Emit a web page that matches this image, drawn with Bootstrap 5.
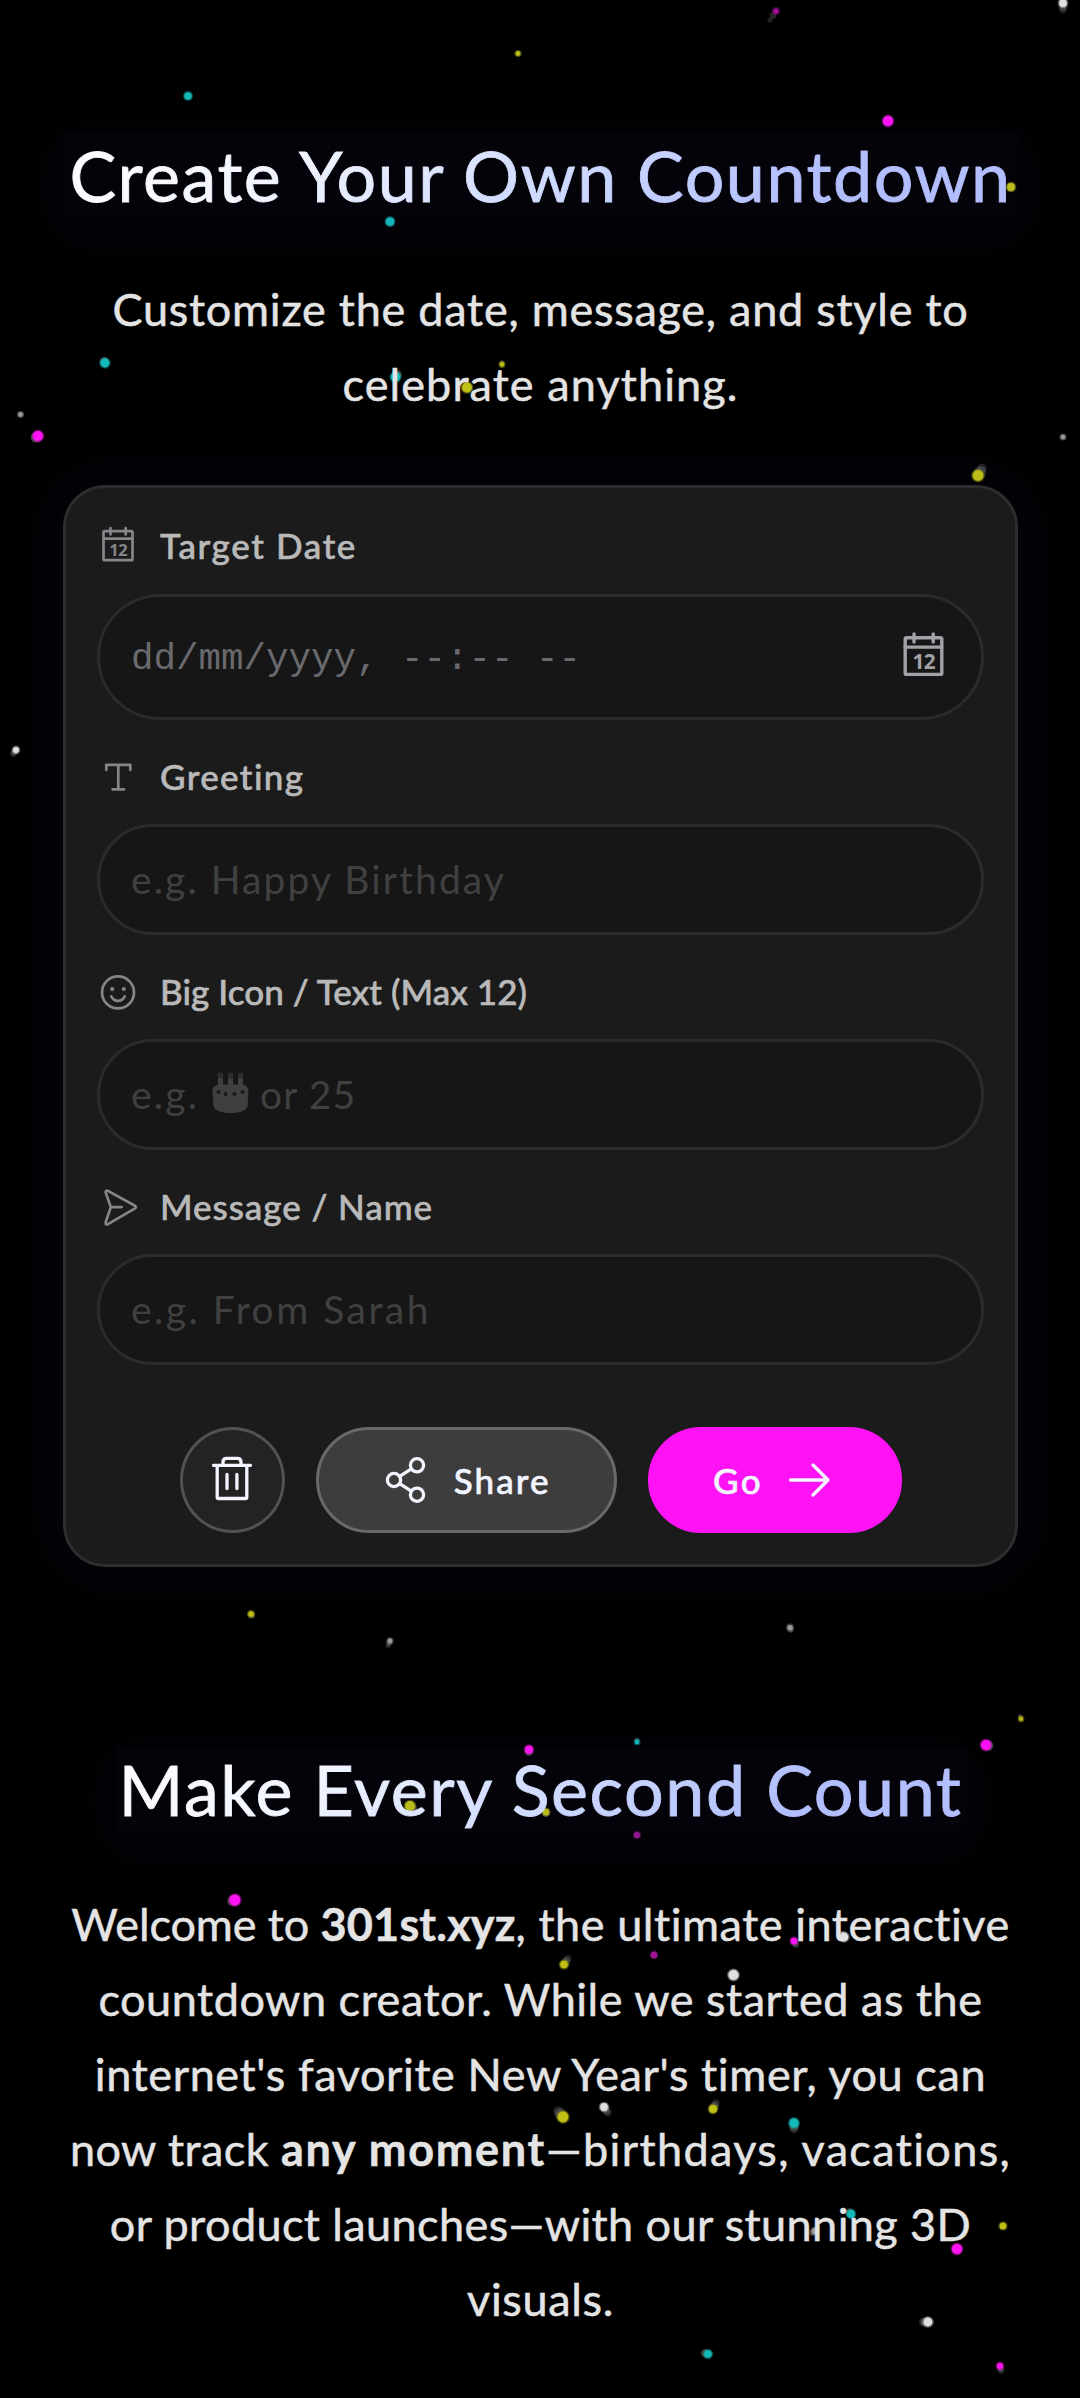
<!DOCTYPE html>
<html lang="en">
<head>
<meta charset="utf-8">
<meta name="viewport" content="width=device-width, initial-scale=1">
<title>Create Your Own Countdown</title>
<link href="https://cdn.jsdelivr.net/npm/bootstrap@5.3.0/dist/css/bootstrap.min.css" rel="stylesheet">
<style>
body{background:#000;color:#e4e4e4;font-family:Lato,"Noto Sans",sans-serif;min-height:2398px;overflow-x:hidden}
.stars{position:absolute;left:0;top:0;width:1080px;height:2398px;z-index:0}
.page{z-index:1;width:955px;margin-left:63px;padding-top:133px}
.title{font-size:70px;line-height:84px;font-weight:400;margin:0;white-space:nowrap;color:transparent;-webkit-text-stroke:.9px transparent;background:linear-gradient(135deg,#fff 0%,#f2f5ff 24%,#d0dcff 50%,#b2befd 78%,#b2befd 100%);-webkit-background-clip:text;background-clip:text}
.title-wrap{box-shadow:0 12px 60px 22px rgba(110,70,230,.04);background:rgba(110,70,230,.04)}
.intro{font-size:45px;line-height:75px;margin:0;white-space:nowrap;-webkit-text-stroke:.5px currentColor}
.intro strong{font-weight:700}
.panel{--bs-card-bg:#1b1b1b;border:3px solid #2d2d2d;border-radius:42px;padding:37px 31px 31px;margin-top:63px;box-shadow:0 0 60px 30px rgba(110,70,230,.04)}
.field{margin-bottom:36px}
.field-label{height:42px;gap:21px;font-size:35px;font-weight:500;line-height:42px;color:#b9b9b9;margin-bottom:26.5px;white-space:nowrap;-webkit-text-stroke:.6px currentColor}
.field-label svg{color:#85858a;-webkit-text-stroke:0}
.field-label span{position:relative;top:-1px}
.field-box,.field-box:focus{height:110.5px;border:3px solid #2b2b2b;background:#161616;color:#404040;font-size:39px;padding:0 31px;line-height:1.2}
.field-box::placeholder{color:#404040;opacity:1}
.date-box,.date-box:focus{height:126px;color:#6a6a6e;font:37.5px/44px "Liberation Mono",monospace}
.date-box svg{color:#a1a1a8}
.date-box span{padding-top:4px}
.actions{gap:31px;margin-top:62.5px}
.actions .btn{height:106px;border-width:3px;font-size:35px;font-weight:500;color:#f2f5ff;line-height:42px;-webkit-text-stroke:.6px currentColor}
.btn-trash{width:105.5px;background:#232323;border-color:#525252}
.btn-share{width:300.5px;gap:24px;background:#3d3d3d;border-color:#69696c}
.btn-go{width:254px;gap:22px;padding-right:3px!important;background:#ff12f3;border-color:#ff12f3}
svg.ic{fill:none;stroke:currentColor;stroke-width:2.7;stroke-linecap:round;stroke-linejoin:round;flex:none}
.actions svg.ic{stroke-width:3.3}
.second{margin-top:180px}
</style>
<script src="https://cdn.jsdelivr.net/npm/bootstrap@5.3.0/dist/js/bootstrap.bundle.min.js"></script>
</head>
<body>
<svg class="stars" id="stars" viewBox="0 0 1080 2398" aria-hidden="true"></svg>
<main class="page position-relative">
  <section class="text-center">
    <div class="title-wrap"><h1 class="title" style="letter-spacing:1.5px">Create Your Own Countdown</h1></div>
    <p class="intro" style="padding-top:55px">
      <span class="d-block" style="letter-spacing:.75px">Customize the date, message, and style to</span>
      <span class="d-block" style="letter-spacing:1.1px">celebrate anything.</span>
    </p>
  </section>

  <form class="card panel">
    <div class="field">
      <div class="field-label d-flex align-items-center" style="letter-spacing:1.62px">
        <svg class="ic" width="42" height="42" viewBox="0 0 42 42"><rect x="6.5" y="6.2" width="29" height="29" rx="1.2"/><path d="M6.5 13.6h29M13.5 3.2v6.3M28.7 3.2v6.3"/><text x="21.2" y="30.8" text-anchor="middle" font-family="Open Sans" font-weight="700" font-size="16.5" letter-spacing="-.6" fill="currentColor" stroke="none">12</text></svg><span>Target Date</span></div>
      <div class="form-control rounded-pill field-box date-box d-flex align-items-center justify-content-between"><span>dd/mm/yyyy, --:-- --</span>
        <svg class="ic" width="53" height="53" viewBox="0 0 42 42"><rect x="6.5" y="6.2" width="29" height="29" rx="1.2"/><path d="M6.5 13.6h29M13.5 3.2v6.3M28.7 3.2v6.3"/><text x="21.2" y="30.8" text-anchor="middle" font-family="Open Sans" font-weight="700" font-size="16.5" letter-spacing="-.6" fill="currentColor" stroke="none">12</text></svg>
      </div>
    </div>
    <div class="field">
      <label class="field-label d-flex align-items-center" for="greet" style="letter-spacing:1.38px">
        <svg class="ic" width="42" height="42" viewBox="0 0 42 42"><path d="M9.3 14V8.8h24V14M21.3 8.8v24.5M15.5 33.3h11.6"/></svg><span>Greeting</span></label>
      <input id="greet" class="form-control rounded-pill field-box" style="letter-spacing:2.1px" placeholder="e.g. Happy Birthday">
    </div>
    <div class="field">
      <div class="field-label d-flex align-items-center" style="letter-spacing:.07px">
        <svg class="ic" width="42" height="42" viewBox="0 0 42 42"><circle cx="21" cy="21.4" r="16"/><path d="M14.2 25.4c3.2 6 10.4 6 13.6 0"/><g fill="currentColor" stroke="none"><circle cx="15.2" cy="18" r="2.1"/><circle cx="26.8" cy="18" r="2.1"/></g></svg><span>Big Icon / Text (Max 12)</span></div>
      <div class="form-control rounded-pill field-box d-flex align-items-center"><span style="letter-spacing:2.2px">e.g.</span>
        <svg width="37" height="42" viewBox="0 0 37 42" style="margin:0 11px 3px 13px" fill="#3f3f3f"><path d="M.5 19c0-3.5 2.500-5.500 5.500-6.500h25c3 1 5.500 3 5.500 6.500l-1 15.500C33 39.500 26 41 18.500 41S4 39.500 1.500 34.500z"/><rect x="6" y="5" width="5" height="14" rx="1.500"/><rect x="16" y="5" width="5" height="14" rx="1.500"/><rect x="26" y="5" width="5" height="14" rx="1.500"/><g fill="#2d2d2d"><circle cx="8.500" cy="3.500" r="3"/><circle cx="18.500" cy="3.500" r="3"/><circle cx="28.500" cy="3.500" r="3"/></g><g fill="#191919"><circle cx="6.500" cy="20" r="2"/><circle cx="13.500" cy="22" r="2"/><circle cx="22.500" cy="22" r="2"/><circle cx="30.500" cy="20" r="2"/></g></svg><span style="letter-spacing:1.1px">or 25</span></div>
    </div>
    <div class="field mb-0">
      <label class="field-label d-flex align-items-center" for="msg" style="letter-spacing:.94px">
        <svg class="ic" width="42" height="42" viewBox="0 0 42 42"><path d="M11 4.900 38 19.800q2 1.300 0 2.600L11 38.200q-2.800.900-2.300-1.900l5.100-15.200L8.700 6.600q-.4-2.800 2.300-1.700zM13.800 21.100h10.900"/></svg><span>Message / Name</span></label>
      <input id="msg" class="form-control rounded-pill field-box" style="letter-spacing:2.5px" placeholder="e.g. From Sarah">
    </div>
    <div class="actions d-flex justify-content-center">
      <button type="button" class="btn rounded-circle btn-trash p-0 d-flex align-items-center justify-content-center" aria-label="Clear">
        <svg class="ic" width="48" height="48" viewBox="0 0 48 48"><path d="M5.500 9.300h37M9.200 9.300v32q0 1.200 1.200 1.200h27.200q1.200 0 1.200-1.200v-32M15 9V6q0-3.700 3.700-3.700h10.600Q33 2.300 33 6v3M19 18.500v14M28.900 18.500v14"/></svg></button>
      <button type="button" class="btn rounded-pill btn-share p-0 d-flex align-items-center justify-content-center">
        <svg class="ic" width="48" height="48" viewBox="0 0 48 48"><circle cx="35" cy="9.300" r="6.600"/><circle cx="12" cy="24" r="6.600"/><circle cx="35" cy="38.700" r="6.600"/><path d="M17.600 20.400l11.800-7.500M17.600 27.600l11.800 7.500"/></svg><span style="letter-spacing:2.1px">Share</span></button>
      <button type="button" class="btn rounded-pill btn-go p-0 d-flex align-items-center justify-content-center"><span style="letter-spacing:2.4px">Go</span>
        <svg class="ic" width="48" height="48" viewBox="0 0 48 48"><path d="M5.500 24h37.500M28 9l15 15-15 15"/></svg></button>
    </div>
  </form>

  <section class="text-center second">
    <div class="title-wrap mx-auto" style="width:850px"><h2 class="title" style="letter-spacing:1.58px">Make Every Second Count</h2></div>
    <p class="intro" style="padding-top:56px">
      <span class="d-block"><span style="letter-spacing:-.1px">Welcome to </span><strong style="letter-spacing:.18px">301st.xyz</strong><span style="letter-spacing:.55px">, the ultimate interactive</span></span>
      <span class="d-block" style="letter-spacing:.52px">countdown creator. While we started as the</span>
      <span class="d-block" style="letter-spacing:.61px">internet's favorite New Year's timer, you can</span>
      <span class="d-block"><span style="letter-spacing:.44px">now track </span><strong style="letter-spacing:1.68px">any moment</strong><span style="letter-spacing:1.36px">—birthdays, vacations,</span></span>
      <span class="d-block" style="letter-spacing:.4px">or product launches—with our stunning 3D</span>
      <span class="d-block" style="letter-spacing:.66px">visuals.</span>
    </p>
  </section>
</main>
<script>
// Confetti: x, y, radius, colour key, tail offset x, tail offset y
const tint = {y:'#c0c014', c:'#12baba', m:'#ff12f3', d:'#a3109c', w:'#e0e0e0', g:'#9a9a9a'};
const dots = [[776,11,3.2,'d',-6,9],[1063,3,4.5,'w',0,7],[518,53.5,2.8,'y',0,0],[188,96,4.2,'c',0,0],[888,121,5.6,'m',0,0],[1011,187,4.5,'y',0,0],[390,221.5,4.7,'c',0,1],[105,363,5,'c',-1,-2],[395.500,377,5.3,'c',2,-3],[502,364.5,2.8,'y',0,-2],[467,387.5,5.5,'y',0,0],[20.5,414.5,2.8,'g',0,0],[38,436,5.6,'m',-3,2],[1063,437,2.8,'g',0,0],[978,475.5,6,'y',4,-7],[16,750,3.6,'w',-3,4],
[251,1614,3.3,'y',1,2],[390,1641,3,'g',-2,5],[790,1627.5,3.2,'g',1,3],[1021,1719,2.6,'y',-1,-3],[986,1745,5.6,'m',3,1],[637,1742,2.8,'c',0,-2],[529,1749.5,4.5,'m',0,3],[410,1806,5.5,'y',4,6],[546,1812,3.8,'y',0,2],[637,1835,3.2,'d',0,0],[235,1900,6,'m',-3,1],[794,1941,3.8,'m',2,4],[844,1937,5,'w',-3,-2],[654,1955,3.6,'d',0,0],[564,1964.5,4.4,'y',4,-6],[733.5,1975,5.6,'w',0,0],
[563,2117,6,'y',-5,-6],[604,2107,4.5,'w',4,6],[713,2109,4.6,'y',3,-6],[794,2123,5.3,'c',0,6],[851,2214,4.6,'c',-2,-2],[815,2231,3.8,'g',-3,2],[1003,2226,3.8,'y',0,0],[957,2249,5.6,'m',0,0],[928,2322,5,'w',-5,0],[708,2354,4.4,'c',-4,-1],[1000,2366,3.6,'m',1,5]];
document.getElementById('stars').innerHTML = dots.map(([x,y,r,k,a,b]) =>
  `<circle cx="${x+a}" cy="${y+b}" r="${r*.8}" fill="#fff" opacity=".13"/><circle cx="${x+a/2}" cy="${y+b/2}" r="${r}" fill="#fff" opacity=".15"/><circle cx="${x}" cy="${y}" r="${r+.8}" fill="${tint[k]}" opacity=".4"/><circle cx="${x}" cy="${y}" r="${r-.6}" fill="${tint[k]}"/>`).join('');
</script>
</body>
</html>
